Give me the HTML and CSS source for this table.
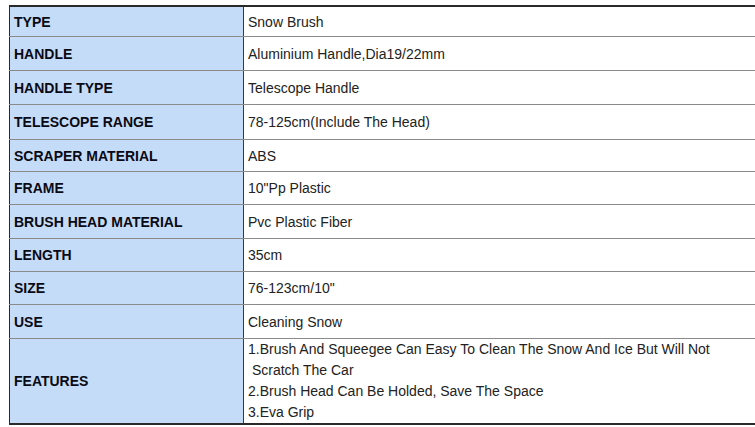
FILE: index.html
```html
<!DOCTYPE html>
<html>
<head>
<meta charset="utf-8">
<link rel="stylesheet" href="styles.css">
</head>
<body>
<div class="page">
<table class="spec">
<tr class="r1"><th>TYPE</th><td>Snow Brush</td></tr>
<tr class="r2"><th>HANDLE</th><td>Aluminium Handle,Dia19/22mm</td></tr>
<tr class="r2"><th>HANDLE TYPE</th><td>Telescope Handle</td></tr>
<tr class="r3"><th>TELESCOPE RANGE</th><td>78-125cm(Include The Head)</td></tr>
<tr class="r4"><th>SCRAPER MATERIAL</th><td>ABS</td></tr>
<tr class="r5"><th>FRAME</th><td>10"Pp Plastic</td></tr>
<tr class="r2"><th>BRUSH HEAD MATERIAL</th><td>Pvc Plastic Fiber</td></tr>
<tr class="r5"><th>LENGTH</th><td>35cm</td></tr>
<tr class="r5"><th>SIZE</th><td>76-123cm/10"</td></tr>
<tr class="r2"><th>USE</th><td>Cleaning Snow</td></tr>
<tr class="rf"><th>FEATURES</th><td class="multi">1.Brush And Squeegee Can Easy To Clean The Snow And Ice But Will Not<br>&nbsp;Scratch The Car<br>2.Brush Head Can Be Holded, Save The Space<br>3.Eva Grip</td></tr>
</table>
</div>
</body>
</html>
```
FILE: styles.css
```css
html, body {
  margin: 0;
  padding: 0;
  background: #ffffff;
  overflow: hidden;
}
.page {
  padding: 5px 0 0 9px;
}
.spec {
  border-collapse: collapse;
  width: 780px;
  font-family: "Liberation Sans", Arial, sans-serif;
  font-size: 14px;
  border: 1px solid #2a2a2a;
  border-top: 2px solid #2a2a2a;
  border-bottom: 2px solid #2a2a2a;
}
.spec th, .spec td {
  border-top: 1px solid #8a8a8a;
  border-bottom: 1px solid #8a8a8a;
  padding: 0 4px;
  text-align: left;
  vertical-align: middle;
}
.spec th {
  width: 225px;
  background: #c5dcf8;
  color: #0a0a14;
  font-weight: bold;
  border-right: 1px solid #3a3a3a;
}
.spec td {
  color: #222;
}
.r1 th, .r1 td { height: 29px; }
.r2 th, .r2 td { height: 33px; }
.r3 th, .r3 td { height: 34px; }
.r4 th, .r4 td { height: 31px; }
.r5 th, .r5 td { height: 32px; }
.rf th, .rf td { height: 84px; }
.multi {
  line-height: 21px;
  padding-top: 0;
  padding-bottom: 0;
}
```
